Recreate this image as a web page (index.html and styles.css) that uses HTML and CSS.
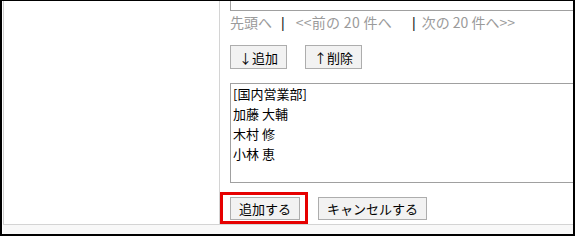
FILE: index.html
```html
<!DOCTYPE html>
<html lang="ja">
<head>
<meta charset="utf-8">
<link rel="stylesheet" href="styles.css">
</head>
<body>
<div class="frame">
  <div class="panel">
    <div class="side"></div>
    <div class="main">
      <div class="search-box"></div>
      <div class="pager">
        <span class="link">先頭へ</span><span class="sep">|</span><span class="link link-prev">&lt;&lt;前の 20 件へ</span><span class="sep sep-2">|</span><span class="link">次の 20 件へ&gt;&gt;</span>
      </div>
      <div class="move-row">
        <button class="btn btn-move">↓追加</button>
        <button class="btn btn-move">↑削除</button>
      </div>
      <div class="list-box">
        <div class="item">[国内営業部]</div>
        <div class="item">加藤 大輔</div>
        <div class="item">木村 修</div>
        <div class="item">小林 恵</div>
      </div>
      <div class="action-row">
        <div class="highlight-wrap">
          <button class="btn btn-action">追加する</button>
          <span class="highlight"></span>
        </div>
        <button class="btn btn-action">キャンセルする</button>
      </div>
    </div>
  </div>
  <div class="footer"></div>
</div>
</body>
</html>
```

FILE: styles.css
```css
html, body {
  margin: 0;
  padding: 0;
  background: #fff;
}

body {
  font-family: "Noto Sans CJK JP", "Noto Sans", sans-serif;
  font-size: 13px;
  color: #000;
}

.frame {
  width: 575px;
  height: 236px;
  box-sizing: border-box;
  border-top: 1px solid #000;
  border-left: 2px solid #000;
  border-right: 2px solid #000;
  border-bottom: 2px solid #000;
  padding-left: 1px;
  overflow: hidden;
  background: #fff;
}

.panel {
  display: flex;
  height: 224px;
  box-sizing: border-box;
  border-left: 1px solid #cfcfcf;
  border-bottom: 1px solid #d4d4d4;
}

.side {
  width: 215px;
  flex: none;
  border-right: 1px solid #d4d4d4;
}

.main {
  flex: none;
  width: 420px;
  padding-left: 10px;
  display: flex;
  flex-direction: column;
}

.search-box {
  height: 10px;
  box-sizing: border-box;
  border: 1px solid #a0a0a0;
  border-top: none;
}

.pager {
  margin-top: 1px;
  height: 20px;
  line-height: 20px;
  font-size: 14px;
  white-space: nowrap;
  color: #999;
}

.pager .link {
  color: #9a9a9a;
}

.pager .link-prev {
  letter-spacing: 0.3px;
}

.pager .sep {
  font-family: "Liberation Sans", sans-serif;
  color: #222;
  margin: 0 11px 0 9px;
}

.pager .sep-2 {
  margin: 0 6px 0 20px;
}

.move-row {
  margin-top: 13px;
  display: flex;
  gap: 18px;
}

.btn {
  font-family: inherit;
  font-size: 13px;
  color: #000;
  background: #f2f2f2;
  border: 1px solid #adadad;
  border-radius: 0;
  padding: 0 8px;
  margin: 0;
  box-sizing: border-box;
  line-height: 1;
}

.btn-move {
  height: 24px;
}

.list-box {
  margin-top: 14px;
  height: 100px;
  box-sizing: border-box;
  border: 1px solid #a0a0a0;
  padding: 0 2px;
}

.item {
  height: 20px;
  line-height: 20px;
  white-space: nowrap;
}

.action-row {
  margin-top: 14px;
  display: flex;
  gap: 18px;
}

.btn-action {
  height: 23px;
}

.highlight-wrap {
  position: relative;
  display: flex;
}

.highlight {
  position: absolute;
  left: -10px;
  top: -5px;
  width: 88px;
  height: 32px;
  box-sizing: border-box;
  border: 3px solid #e60000;
}

.footer {
  height: 9px;
  background: #f8f8f8;
}
```
